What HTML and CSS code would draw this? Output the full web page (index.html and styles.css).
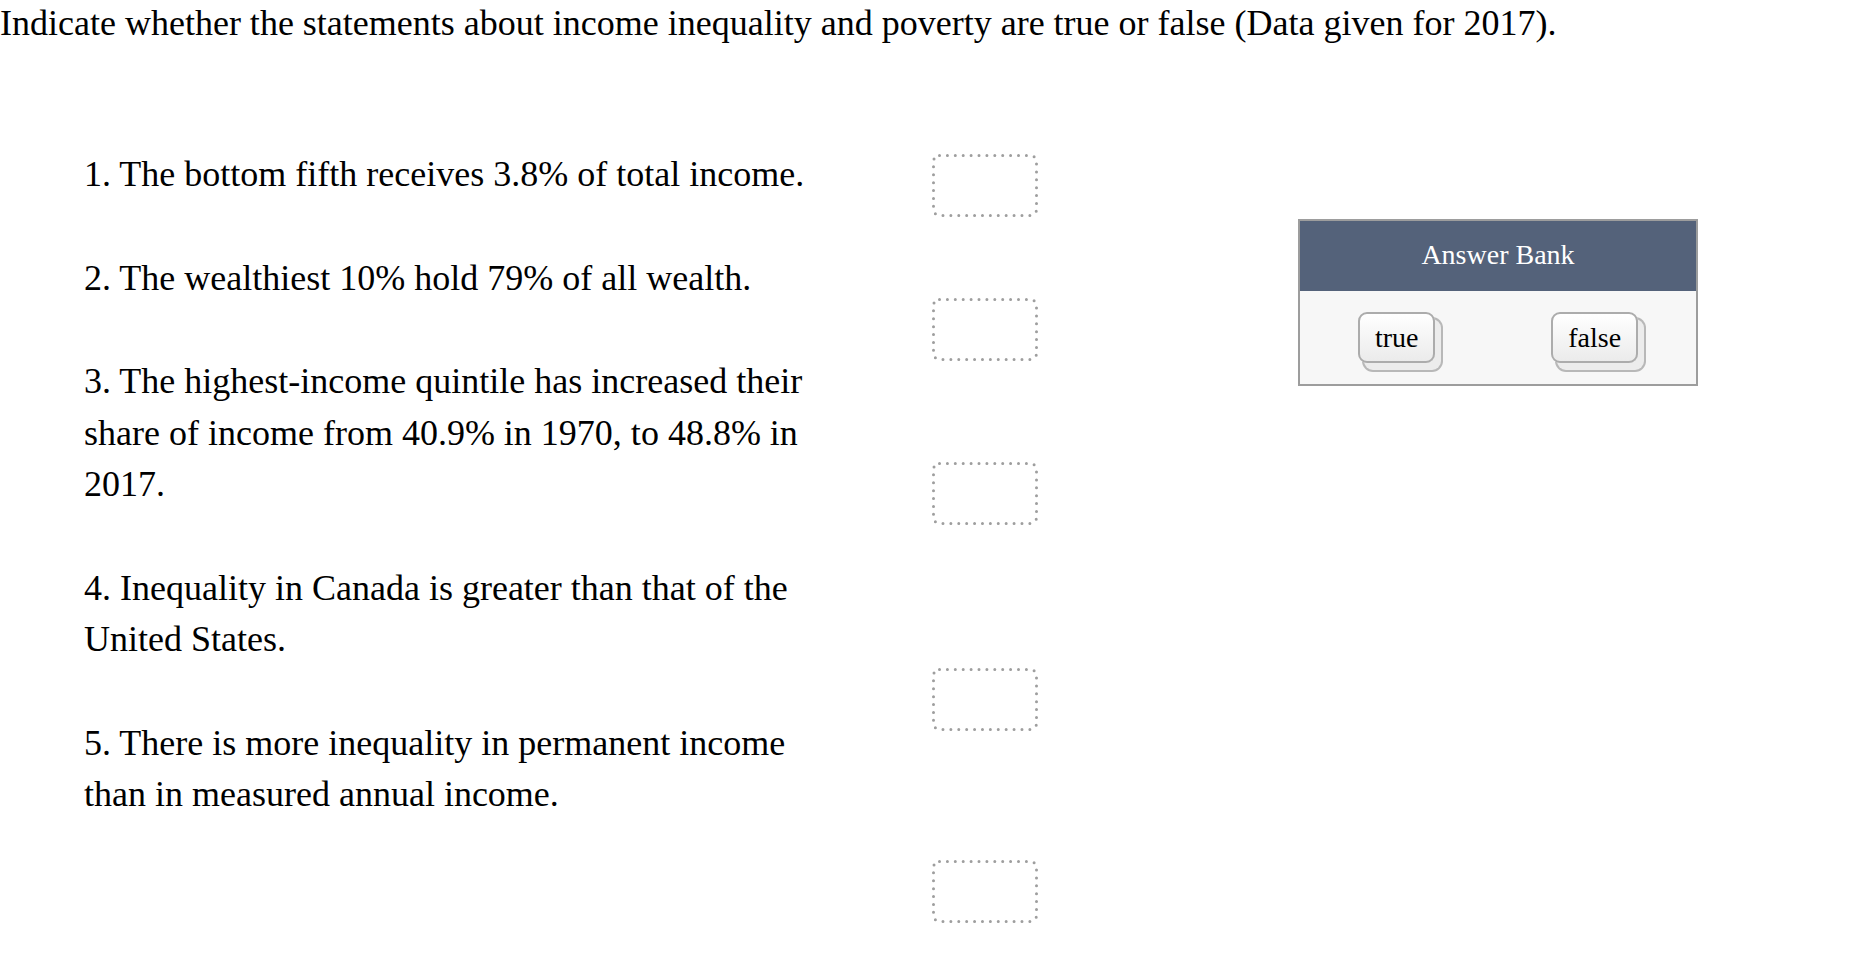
FILE: index.html
```html
<!DOCTYPE html>
<html>
<head>
<meta charset="utf-8">
<link rel="stylesheet" href="styles.css">
</head>
<body>
<div class="title">Indicate whether the statements about income inequality and poverty are true or false (Data given for 2017).</div>
<div class="content">
  <div class="statements">
    <p class="stmt">1. The bottom fifth receives 3.8% of total income.</p>
    <p class="stmt">2. The wealthiest 10% hold 79% of all wealth.</p>
    <p class="stmt">3. The highest-income quintile has increased their share of income from 40.9% in 1970, to 48.8% in 2017.</p>
    <p class="stmt">4. Inequality in Canada is greater than that of the United States.</p>
    <p class="stmt">5. There is more inequality in permanent income than in measured annual income.</p>
  </div>
  <div class="drops">
    <svg class="drop drop1" width="106" height="63" viewBox="0 0 106 63"><rect x="1.5" y="1.5" width="103" height="60" rx="6" fill="none" stroke="#9e9e9e" stroke-width="3" stroke-dasharray="0 7.9" stroke-linecap="round"/></svg>
    <svg class="drop drop2" width="106" height="63" viewBox="0 0 106 63"><rect x="1.5" y="1.5" width="103" height="60" rx="6" fill="none" stroke="#9e9e9e" stroke-width="3" stroke-dasharray="0 7.9" stroke-linecap="round"/></svg>
    <svg class="drop drop3" width="106" height="63" viewBox="0 0 106 63"><rect x="1.5" y="1.5" width="103" height="60" rx="6" fill="none" stroke="#9e9e9e" stroke-width="3" stroke-dasharray="0 7.9" stroke-linecap="round"/></svg>
    <svg class="drop drop4" width="106" height="63" viewBox="0 0 106 63"><rect x="1.5" y="1.5" width="103" height="60" rx="6" fill="none" stroke="#9e9e9e" stroke-width="3" stroke-dasharray="0 7.9" stroke-linecap="round"/></svg>
    <svg class="drop drop5" width="106" height="63" viewBox="0 0 106 63"><rect x="1.5" y="1.5" width="103" height="60" rx="6" fill="none" stroke="#9e9e9e" stroke-width="3" stroke-dasharray="0 7.9" stroke-linecap="round"/></svg>
  </div>
  <div class="bank">
    <div class="bank-head">Answer Bank</div>
    <div class="bank-body">
      <div class="chip">true</div>
      <div class="chip">false</div>
    </div>
  </div>
</div>
</body>
</html>
```
FILE: styles.css
```css
html, body {
  margin: 0;
  padding: 0;
  background: #ffffff;
}
body {
  font-family: "Liberation Serif", "Times New Roman", serif;
  color: #000;
  width: 1850px;
  height: 970px;
  overflow: hidden;
}
.title {
  font-size: 36px;
  line-height: 41px;
  padding-top: 3px;
  height: 57px;
  white-space: nowrap;
}
.content {
  display: flex;
  align-items: flex-start;
}
.statements {
  margin-left: 84px;
  width: 750px;
  padding-top: 89px;
}
.stmt {
  margin: 0 0 52px 0;
  font-size: 36px;
  line-height: 51.5px;
}
.drops {
  margin-left: 98px;
  width: 106px;
  display: flex;
  flex-direction: column;
}
.drop { display: block; }
.drop1 { margin-top: 94px; }
.drop2 { margin-top: 81px; }
.drop3 { margin-top: 101px; }
.drop4 { margin-top: 143px; }
.drop5 { margin-top: 129px; }
.bank {
  margin-left: 260px;
  margin-top: 159px;
  width: 400px;
  box-sizing: border-box;
  border: 2px solid #9d9d9d;
  background: #f7f7f7;
}
.bank-head {
  background: #54627a;
  color: #ffffff;
  height: 70px;
  line-height: 68px;
  text-align: center;
  font-size: 28px;
}
.bank-body {
  display: flex;
  justify-content: space-around;
  align-items: flex-start;
  height: 93px;
  padding-top: 21px;
  box-sizing: border-box;
}
.chip {
  box-sizing: border-box;
  height: 51px;
  line-height: 47px;
  padding: 0 15px;
  font-size: 28px;
  border: 2px solid #acacac;
  border-radius: 9px;
  background: linear-gradient(#ffffff, #ebebeb);
  box-shadow: 6px 7px 0 0 #ececec, 6px 7px 0 2px #b8b8b8;
}
```
